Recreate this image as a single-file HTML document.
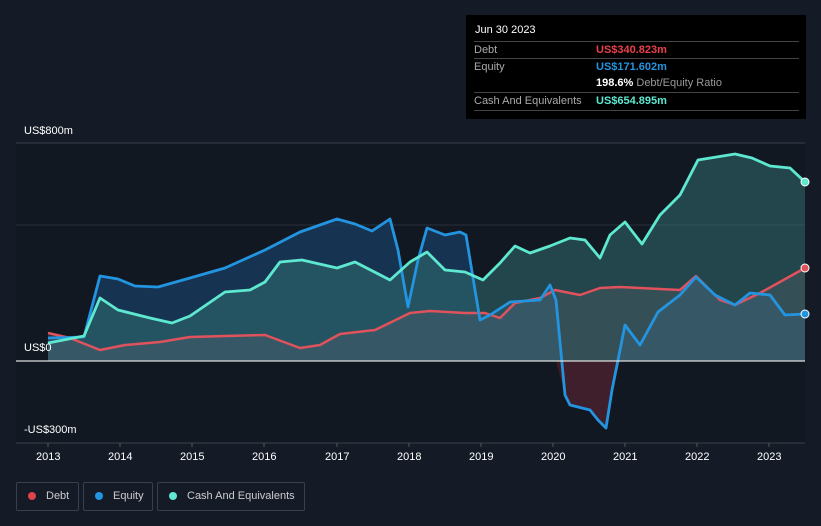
<!DOCTYPE html>
<html><head><style>
body{margin:0;width:821px;height:526px;background:#151b26;font-family:"Liberation Sans",sans-serif;overflow:hidden;position:relative}
.t{position:absolute;color:#fff;font-size:11px}
.tip{position:absolute;left:466px;top:15px;width:340px;height:104px;background:#000;}
.row{position:absolute;left:8px;width:325px;font-size:11px;color:#aaa;border-top:1px solid #444;height:17px;line-height:17px}
.leg{position:absolute;top:482px;height:27px;border:1px solid #3a404b;border-radius:2px;color:#ccc;font-size:11px;line-height:27px}
.dot{display:inline-block;width:8px;height:8px;border-radius:50%;margin:0 10px 0 11px;vertical-align:-0.5px}
</style></head><body>
<svg width="821" height="526" style="position:absolute;left:0;top:0">
<rect x="16" y="143" width="789" height="300" fill="#121822"/>
<line x1="16" y1="143" x2="805" y2="143" stroke="#3a404b"/>
<line x1="16" y1="225" x2="805" y2="225" stroke="#2a303b"/>
<line x1="16" y1="443" x2="805" y2="443" stroke="#3a404b"/>
<polygon fill="#1a3c63" fill-opacity="0.75" points="48,361 48,338 84,337 100,276 118,279 135,286 158,287 190,278 225,268 265,250 300,232 337,219 355,224 372,231 390,219 398,250 408,307 418,260 427,228 445,235 460,232 466,235 475,290 480,320 490,315 510,302 540,300 550,285 556,300 565,395 570,405 590,410 598,420 606,428 612,390 625,325 640,345 658,312 680,295 696,277 715,295 735,305 750,293 770,295 785,315 805,314 805,361"/>
<polygon fill="#2f6e6e" fill-opacity="0.55" points="48,361 48,343 84,336 100,298 118,310 150,318 172,323 190,316 225,292 250,290 265,282 280,262 302,260 337,268 355,262 390,280 410,262 427,252 445,270 465,272 483,280 500,263 515,246 530,253 550,246 570,238 585,240 600,258 610,235 625,222 642,244 660,215 680,195 698,160 735,154 752,158 770,166 790,168 805,182 805,361"/>
<polygon fill="#5a6070" fill-opacity="0.35" points="48,361 48,333 70,338 100,350 125,345 160,342 190,337 225,336 265,335 300,348 320,345 340,334 375,330 410,313 430,311 465,313 485,313 500,318 515,303 540,298 555,290 580,295 600,288 620,287 680,290 696,276 720,300 735,305 760,293 805,268 805,361"/>
<polygon fill="#4a1a22" fill-opacity="0.8" points="556,361 565,395 570,405 590,410 598,420 606,428 612,390 620,361"/>
<polyline fill="none" stroke="#e0525c" stroke-width="2.5" stroke-linejoin="round" points="48,333 70,338 100,350 125,345 160,342 190,337 225,336 265,335 300,348 320,345 340,334 375,330 410,313 430,311 465,313 485,313 500,318 515,303 540,298 555,290 580,295 600,288 620,287 680,290 696,276 720,300 735,305 760,293 805,268"/>
<polyline fill="none" stroke="#2394df" stroke-width="2.8" stroke-linejoin="round" points="48,338 84,337 100,276 118,279 135,286 158,287 190,278 225,268 265,250 300,232 337,219 355,224 372,231 390,219 398,250 408,307 418,260 427,228 445,235 460,232 466,235 475,290 480,320 490,315 510,302 540,300 550,285 556,300 565,395 570,405 590,410 598,420 606,428 612,390 625,325 640,345 658,312 680,295 696,277 715,295 735,305 750,293 770,295 785,315 805,314"/>
<polyline fill="none" stroke="#5ee8d0" stroke-width="2.8" stroke-linejoin="round" points="48,343 84,336 100,298 118,310 150,318 172,323 190,316 225,292 250,290 265,282 280,262 302,260 337,268 355,262 390,280 410,262 427,252 445,270 465,272 483,280 500,263 515,246 530,253 550,246 570,238 585,240 600,258 610,235 625,222 642,244 660,215 680,195 698,160 735,154 752,158 770,166 790,168 805,182"/>
<line x1="16" y1="361" x2="805" y2="361" stroke="#ddd" stroke-width="1.2"/>
<circle cx="805" cy="268" r="4" fill="#e0525c" stroke="#fff" stroke-width="1"/>
<circle cx="805" cy="314" r="4" fill="#2394df" stroke="#fff" stroke-width="1"/>
<circle cx="805" cy="182" r="4" fill="#5ee8d0" stroke="#fff" stroke-width="1"/>
<g stroke="#555"><line x1="48" y1="443" x2="48" y2="447"/><line x1="120" y1="443" x2="120" y2="447"/><line x1="192" y1="443" x2="192" y2="447"/><line x1="264" y1="443" x2="264" y2="447"/><line x1="337" y1="443" x2="337" y2="447"/><line x1="409" y1="443" x2="409" y2="447"/><line x1="481" y1="443" x2="481" y2="447"/><line x1="553" y1="443" x2="553" y2="447"/><line x1="625" y1="443" x2="625" y2="447"/><line x1="697" y1="443" x2="697" y2="447"/><line x1="769" y1="443" x2="769" y2="447"/></g>
</svg>
<div class="t" style="left:24px;top:125px">US$800m</div>
<div class="t" style="left:24px;top:342px">US$0</div>
<div class="t" style="left:24px;top:424px">-US$300m</div>
<div class="t" style="left:36px;top:451px">2013</div><div class="t" style="left:108px;top:451px">2014</div><div class="t" style="left:180px;top:451px">2015</div><div class="t" style="left:252px;top:451px">2016</div><div class="t" style="left:325px;top:451px">2017</div><div class="t" style="left:397px;top:451px">2018</div><div class="t" style="left:469px;top:451px">2019</div><div class="t" style="left:541px;top:451px">2020</div><div class="t" style="left:613px;top:451px">2021</div><div class="t" style="left:685px;top:451px">2022</div><div class="t" style="left:757px;top:451px">2023</div>
<div class="tip">
<div style="position:absolute;left:9px;top:9px;color:#fff;font-size:11px">Jun 30 2023</div>
<div class="row" style="top:26px">Debt<span style="position:absolute;left:122px;color:#e8414b;font-weight:bold">US$340.823m</span></div>
<div class="row" style="top:43px">Equity<span style="position:absolute;left:122px;color:#2394df;font-weight:bold">US$171.602m</span></div>
<div class="row" style="top:60px;border-top:none"><span style="position:absolute;left:122px;color:#999"><b style="color:#fff">198.6%</b> Debt/Equity Ratio</span></div>
<div class="row" style="top:77px">Cash And Equivalents<span style="position:absolute;left:122px;color:#5ee8d0;font-weight:bold">US$654.895m</span></div>
<div style="position:absolute;left:8px;top:95px;width:325px;border-top:1px solid #444"></div>
</div>
<div class="leg" style="left:16px;width:61px"><span class="dot" style="background:#e0414b"></span>Debt</div>
<div class="leg" style="left:83px;width:68px"><span class="dot" style="background:#2394df"></span>Equity</div>
<div class="leg" style="left:157px;width:146px"><span class="dot" style="background:#5ee8d0"></span>Cash And Equivalents</div>
</body></html>
